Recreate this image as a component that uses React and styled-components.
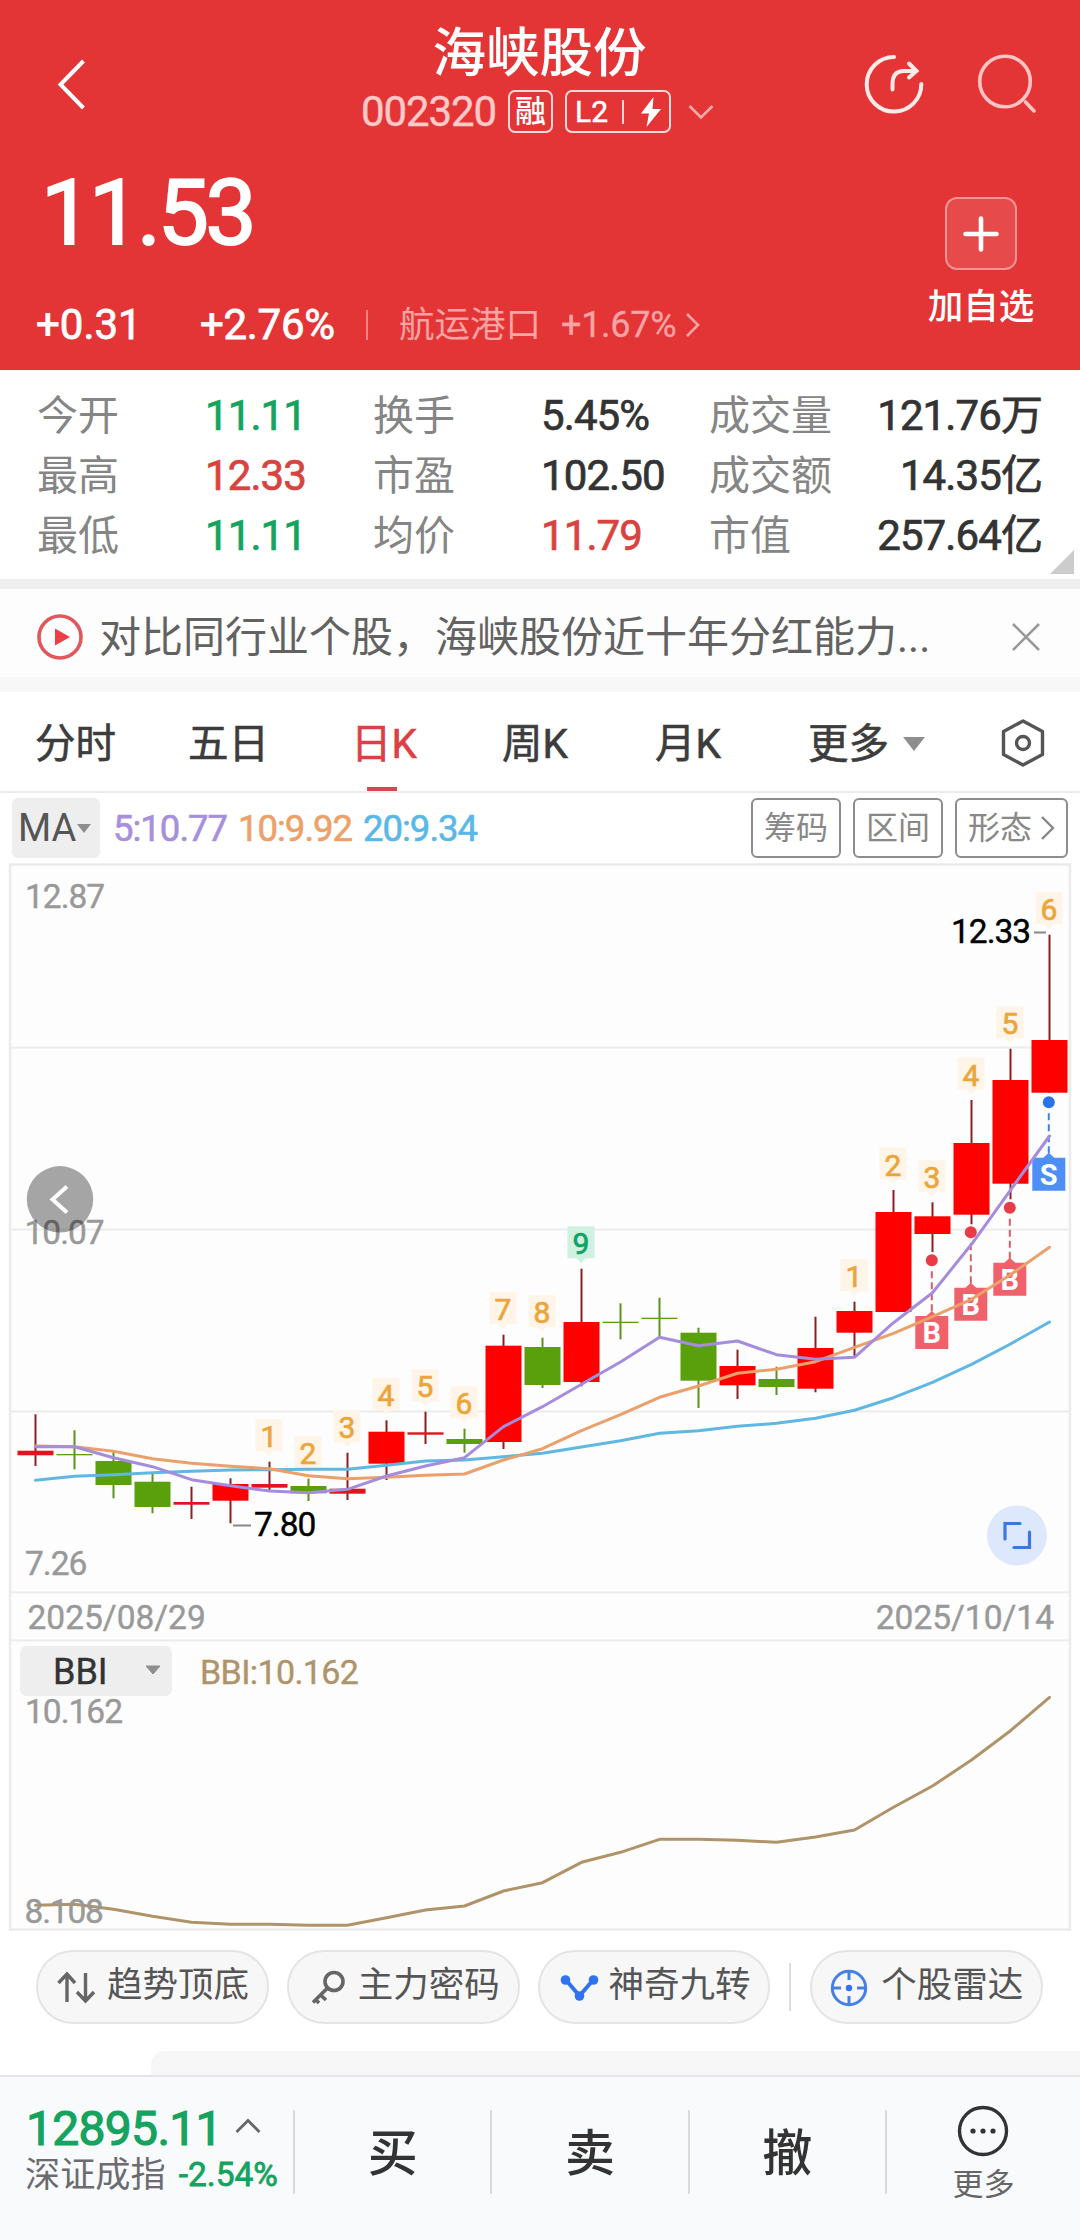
import React from 'react'
import styled, { createGlobalStyle } from 'styled-components'

const GlobalStyle = createGlobalStyle`
*{
    box-sizing: border-box;
}
body {
    margin: 0;
    background: #fff;
    font-family: Roboto, "Noto Sans CJK SC", sans-serif;
    color: #333;
}
svg {
    display: block;
    flex: none;
}
`;

const Page = styled.div`
display: flex;
flex-direction: column;
width: 1080px;
height: 2240px;
overflow: hidden;
background: #fff;
`;

const Num = styled.span`
font-size: ${p => p.$size || 42}px;
line-height: 1;
font-weight: 400;
-webkit-text-stroke: ${p => p.$stroke ?? 0.8}px currentColor;
letter-spacing: ${p => p.$gap ?? -0.6}px;
color: ${p => p.$color || 'inherit'};
white-space: nowrap;
`;

/* ---------- header ---------- */

const Header = styled.header`
height: 370px;
flex: none;
background: #e33536;
color: #fff;
display: flex;
flex-direction: column;
`;

const TopBar = styled.div`
display: grid;
grid-template-columns: 220px 1fr 220px;
height: 148px;
`;

const BackSlot = styled.div`
padding: 58px 0 0 56px;
`;

const TopIcons = styled.div`
display: flex;
gap: 50px;
padding: 53px 0 0 3px;
`;

const TitleBlock = styled.div`
display: flex;
flex-direction: column;
align-items: center;
padding-top: 22px;
`;

const Title = styled.h1`
margin: 0 1px 0 0;
font-size: 53.5px;
line-height: 64px;
font-weight: 500;
`;

const SubTitle = styled.div`
display: flex;
align-items: center;
height: 43px;
margin: 4px 5px 0 0;
`;

const Tag = styled.span`
display: flex;
align-items: center;
justify-content: center;
width: ${p => p.$w}px;
height: 43px;
margin-left: 12px;
border: 2px solid #ffd9d9;
border-radius: 7px;
font-size: 31px;
line-height: 40px;
font-weight: 500;
`;

const TagLine = styled.i`
width: 2px;
height: 24px;
margin: 0 17px 0 14px;
background: #ffd9d9;
`;

const SubArrow = styled.span`
margin-left: 17px;
`;

const PriceArea = styled.div`
display: flex;
justify-content: space-between;
flex: 1;
`;

const PriceColumn = styled.div`
display: flex;
flex-direction: column;
padding: 19px 0 0 36px;
`;

const PriceText = styled(Num)`
line-height: 92px;
margin-left: 5px;
`;

const ChangeRow = styled.div`
display: flex;
align-items: center;
height: 44px;
margin-top: 44px;
`;

const ChangeItem = styled.span`
display: flex;
width: ${p => p.$w}px;
`;

const ThinLine = styled.i`
width: 2px;
height: 30px;
margin-right: 31px;
background: #f08383;
`;

const Sector = styled.span`
display: flex;
align-items: center;
gap: 20px;
font-size: 35.5px;
line-height: 44px;
color: #faa3a4;
`;

const SectorArrow = styled.span`
margin-left: 1px;
`;

const WatchColumn = styled.div`
display: flex;
flex-direction: column;
align-items: center;
width: 198px;
padding-top: 49px;
`;

const PlusBox = styled.div`
display: flex;
align-items: center;
justify-content: center;
width: 72px;
height: 73px;
border: 2px solid #f09494;
border-radius: 12px;
background: #e74a4b;
`;

const WatchText = styled.span`
margin-top: 15px;
font-size: 35.5px;
line-height: 44px;
font-weight: 500;
`;

/* ---------- quote table ---------- */

const Quotes = styled.section`
position: relative;
height: 209px;
flex: none;
padding: 16px 38px 0 37px;
display: grid;
grid-template-columns: 168px 168px 168px 168px 1fr auto;
grid-auto-rows: 60px;
align-items: center;
`;

const QuoteLabel = styled.span`
font-size: 41px;
line-height: 60px;
color: #858585;
white-space: nowrap;
`;

const QuoteValue = styled.span`
font-size: 42px;
line-height: 60px;
letter-spacing: -0.9px;
-webkit-text-stroke: 0.7px currentColor;
color: ${p => p.$color || '#333'};
text-align: ${p => (p.$right ? 'right' : 'left')};
white-space: nowrap;
`;

const Corner = styled.i`
position: absolute;
right: 6px;
bottom: 5px;
border-left: 24px solid transparent;
border-bottom: 24px solid #ccc;
`;

const Band = styled.div`
flex: none;
height: ${p => p.$h}px;
background: ${p => p.$color};
`;

const Notice = styled.section`
display: flex;
align-items: center;
height: 88px;
flex: none;
padding: 8px 40px 0 37px;
background: #fdfdfd;
`;

const NoticeText = styled.span`
flex: 1;
margin: 2px 0 0 16px;
font-size: 42px;
line-height: 60px;
color: #626262;
`;

/* ---------- tabs ---------- */

const Tabs = styled.nav`
display: flex;
align-items: flex-start;
height: 101px;
flex: none;
padding-left: 35px;
border-bottom: 2px solid #ebebeb;
`;

const Tab = styled.span`
display: flex;
flex-direction: column;
width: ${p => p.$w}px;
height: 99px;
padding-top: 21px;
font-size: 40.5px;
line-height: 62px;
-webkit-text-stroke: 0.6px currentColor;
color: ${p => (p.$active ? '#dc3f45' : '#3c3c3c')};
white-space: nowrap;

&::after {
    content: '';
    display: ${p => (p.$active ? 'block' : 'none')};
    width: 30px;
    height: 4px;
    margin: 12px 0 0 16px;
    background: #d04a50;
}
`;

const MoreTab = styled(Tab)`
flex-direction: row;
align-items: center;
justify-content: flex-start;
gap: 14px;
height: 83px;
`;

const HexSlot = styled.span`
padding-top: 26px;
`;

const Caret = styled.i`
width: 0;
border-left: ${p => p.$w / 2}px solid transparent;
border-right: ${p => p.$w / 2}px solid transparent;
border-top: ${p => p.$h}px solid #8e8e8e;
`;

const MaRow = styled.div`
display: flex;
align-items: center;
height: 70px;
flex: none;
padding: 0 12px;
`;

const MaSelect = styled.span`
display: flex;
align-items: center;
gap: 1px;
width: 88px;
height: 60px;
margin-right: 13px;
padding-left: 6px;
border-radius: 6px;
background: #eee;
color: #555;
font-size: 38px;
line-height: 60px;
`;

const MaValue = styled.span`
width: 125px;
font-size: 36.5px;
letter-spacing: -1px;
-webkit-text-stroke: 0.6px currentColor;
color: ${p => p.$color};
white-space: nowrap;
`;

const MaButtons = styled.div`
display: flex;
gap: 12px;
margin-left: auto;
`;

const MaButton = styled.span`
display: flex;
align-items: center;
justify-content: center;
gap: 8px;
width: ${p => p.$w}px;
height: 60px;
border: 2px solid #8d8d8d;
border-radius: 6px;
font-size: 32px;
line-height: 58px;
color: #888;
`;

/* ---------- charts ---------- */

const ChartBox = styled.div`
flex: none;
height: 1069px;
`;

const ToolRow = styled.div`
display: flex;
align-items: center;
height: 120px;
flex: none;
padding: 0 37px 10px 36px;
`;

const Pill = styled.span`
display: flex;
align-items: center;
width: 233px;
height: 74px;
margin-right: ${p => p.$gap || 0}px;
border: 2px solid #e4e4e4;
border-radius: 37px;
background: #f7f7f7;
font-size: 35.5px;
line-height: 66px;
color: #555;
white-space: nowrap;

svg {
    margin: 2px 0 0 17px;
}
span {
    margin: -4px 0 0 8px;
}
`;

const PillLine = styled.i`
width: 2px;
height: 48px;
margin-right: 19px;
background: #ddd;
`;

const NextPanel = styled.div`
flex: none;
height: 24px;
margin: -1px 0 0 151px;
border-radius: 14px 0 0 0;
background: #f7f7f7;
`;

/* ---------- bottom bar ---------- */

const BottomBar = styled.footer`
display: flex;
flex: 1;
border-top: 2px solid #e5e5e7;
background: #f9fafc;
`;

const IndexBlock = styled.div`
flex: none;
width: 293px;
padding: 27px 0 0 26px;
`;

const IndexTop = styled.div`
display: flex;
align-items: center;
gap: 13px;
height: 50px;

svg {
    margin-top: -6px;
}
`;

const IndexBottom = styled.div`
display: flex;
align-items: center;
gap: 13px;
height: 42px;
margin-left: -1px;
font-size: 35.2px;
line-height: 42px;
color: #6b6b70;
white-space: nowrap;
`;

const TradeButton = styled.div`
flex: none;
display: flex;
justify-content: center;
width: 197.3px;
height: 84px;
margin-top: 33px;
border-left: 2px solid #dadadc;
font-size: 50px;
line-height: 88px;
font-weight: 500;
color: #333;
`;

const MoreButton = styled(TradeButton)`
flex: 1;
flex-direction: column;
justify-content: flex-start;
align-items: center;
font-size: 31px;
line-height: 44px;
font-weight: 400;
color: #666;

svg {
    margin-top: -5px;
}
span {
    margin-top: 6px;
}
`;

const GREEN = '#15a35f';
const RED = '#d9433f';

const quotes = [
    ['今开', '11.11', GREEN, '换手', '5.45%', '', '成交量', '121.76万'],
    ['最高', '12.33', RED, '市盈', '102.50', '', '成交额', '14.35亿'],
    ['最低', '11.11', GREEN, '均价', '11.79', RED, '市值', '257.64亿'],
];

// up, high, top, bottom, low, badge
const candles = [
    [1, 1414.3, 1450.7, 1455.3, 1466],
    [0, 1430.3, 1454, 1455.3, 1469.3],
    [0, 1451.7, 1461, 1485, 1498.3],
    [0, 1473.3, 1481.7, 1507, 1513.3],
    [1, 1486.7, 1502, 1504.7, 1519],
    [1, 1478.3, 1484, 1500.7, 1523.3],
    [1, 1461.7, 1484, 1487.7, 1490, '1'],
    [0, 1478.7, 1486, 1493.3, 1501, '2'],
    [1, 1452.7, 1488.7, 1493.7, 1500, '3'],
    [1, 1420.3, 1431.7, 1463.7, 1480, '4'],
    [1, 1411.7, 1432.3, 1434.7, 1444, '5'],
    [0, 1428.7, 1439, 1444, 1452.7, '6'],
    [1, 1334.7, 1345.7, 1442, 1449, '7'],
    [0, 1337.7, 1347, 1385, 1388, '8'],
    [1, 1268.7, 1322, 1382, 1386.3, '9'],
    [0, 1303.3, 1321.7, 1323, 1339.3],
    [0, 1297.7, 1317.7, 1319, 1338],
    [0, 1327.7, 1332.7, 1380.7, 1408],
    [1, 1349.7, 1366, 1385.3, 1399],
    [0, 1366.7, 1379, 1387, 1395],
    [1, 1316.7, 1348, 1388.7, 1392.3],
    [1, 1301.7, 1311, 1332.7, 1356.7, '1'],
    [1, 1190, 1212, 1312, 1312, '2'],
    [1, 1202.3, 1216.3, 1234, 1252, '3'],
    [1, 1100, 1143, 1214.7, 1224.3, '4'],
    [1, 1048.7, 1080, 1183.7, 1199.3, '5'],
    [1, 934.7, 1040, 1092.7, 1092.7, '6'],
];

const ma5 = [1446.7, 1446.7, 1457.7, 1466.7, 1479.7, 1485.7, 1491, 1492.7, 1489.3, 1476, 1466, 1457.7, 1426.7, 1406.7,
    1384.3, 1362, 1337.3, 1345.7, 1341, 1354.7, 1359.3, 1357.3, 1322.7, 1292.7, 1244.3, 1190, 1136];
const ma10 = [1446, 1446.7, 1451.3, 1458.7, 1463.3, 1466.3, 1468.7, 1475.7, 1478.7, 1477.3, 1475.3, 1474, 1460, 1448.7,
    1430.7, 1414.7, 1397.3, 1386, 1373.3, 1369.3, 1361.7, 1347.3, 1333.3, 1316.7, 1299.3, 1274.7, 1247.3];
const ma20 = [1480.3, 1476.3, 1474.7, 1472.7, 1471.3, 1470, 1469.7, 1469.3, 1469.3, 1465.3, 1461, 1460, 1456.7, 1453.3,
    1447, 1440.7, 1433.3, 1430.7, 1426.3, 1423.3, 1418.3, 1410.3, 1397.7, 1382.3, 1364.3, 1344, 1322];
const bbi = [1905.3, 1904.3, 1909.3, 1916.3, 1922.3, 1924.3, 1924.3, 1925.3, 1925.3, 1917.7, 1910, 1906, 1891, 1882.7,
    1862.3, 1852.3, 1839.3, 1839.3, 1840.3, 1842.3, 1837, 1830, 1807.3, 1786, 1760, 1730.7, 1697.3];

// index, dot y, box y, letter
const signals = [
    [23, 1260.3, 1316, 'B'],
    [24, 1232.3, 1287.7, 'B'],
    [25, 1207.7, 1262.7, 'B'],
    [26, 1102.3, 1157.7, 'S'],
];

const xAt = (i) => 35.5 + i * 39;
const toPoints = (list) => list.map((y, i) => `${xAt(i)},${y}`).join(' ');

const AxisText = ({ x, y, children, color = '#999', size = 33.5, gap = -1, anchor = 'start' }) => (
    <text x={x} y={y} fontSize={size} letterSpacing={gap} fill={color} stroke={color} strokeWidth="0.4" textAnchor={anchor}>{children}</text>
)

const Candle = ({ i, data }) => {
    const [up, high, top, bottom, low] = data;
    const x = xAt(i);
    const thin = bottom - top < 6;
    const body = up ? (thin ? '#e0141c' : '#ff0000') : '#5aa00c';
    return (
        <g>
            <line x1={x} x2={x} y1={high} y2={low} stroke={up ? '#8e1f1f' : '#5a9220'} strokeWidth="2" />
            <rect x={x - 18} y={top} width="36" height={bottom - top} fill={body} />
        </g>
    )
}

const Badge = ({ i, high, text }) => {
    const x = xAt(i) - 0.5;
    const y = high - 42.5;
    const green = text === '9';
    const color = green ? '#12a262' : '#eba53a';
    return (
        <g>
            <path d={`M${x - 13.5} ${y}h27v32h-9l-4.5 5l-4.5 -5h-9z`} fill={green ? '#d0f0e0' : '#fff4e8'} />
            <text x={x} y={y + 28} fontSize="30" stroke={color} strokeWidth="0.7" textAnchor="middle" fill={color}>{text}</text>
        </g>
    )
}

const Signal = ({ data }) => {
    const [i, dot, box, text] = data;
    const x = xAt(i) - 0.7;
    const sell = text === 'S';
    return (
        <g>
            <circle cx={x} cy={dot} r="6" fill={sell ? '#2a72e8' : '#ea3a45'} />
            <line x1={x} x2={x} y1={dot + 11} y2={box - 4} stroke={sell ? '#3f82dc' : '#d0606c'} strokeWidth="2" strokeDasharray="7 4" />
            <path d={`M${x - 16.5} ${box}h11l5.5 -5l5.5 5h11v33h-33z`} fill={sell ? '#4d8ef7' : '#f0616b'} />
            <text x={x} y={box + 27} fontSize="29" fontWeight="700" textAnchor="middle" fill="#fff">{text}</text>
        </g>
    )
}

const Charts = () => (
    <svg width="1080" height="1069" viewBox="0 863 1080 1069" fontFamily='Roboto, "Noto Sans CJK SC", sans-serif'>
        <rect x="10" y="864.5" width="1060" height="1065" fill="#fdfdfd" stroke="#ebebeb" strokeWidth="2.5" />
        <g stroke="#ececec" strokeWidth="2">
            <path d="M10 1047.5H1070M10 1229.5H1070M10 1411.5H1070M10 1592.5H1070M10 1640.5H1070" />
        </g>
        <AxisText x="25" y="908">12.87</AxisText>
        <AxisText x="24.5" y="1243.5">10.07</AxisText>
        <AxisText x="25" y="1575">7.26</AxisText>

        {candles.map((c, i) => <Candle key={i} i={i} data={c} />)}
        {candles.map((c, i) => c[5] && <Badge key={i} i={i} high={c[1]} text={c[5]} />)}
        {signals.map((s) => <Signal key={s[0]} data={s} />)}

        <g fill="none" strokeWidth="3" strokeLinejoin="round" strokeLinecap="round">
            <polyline points={toPoints(ma20)} stroke="#5fb7e2" />
            <polyline points={toPoints(ma10)} stroke="#eba06c" />
            <polyline points={toPoints(ma5)} stroke="#a58cdc" />
            <polyline points={toPoints(bbi)} stroke="#af9469" />
        </g>

        <path d="M1034 932.5H1046M233 1525.5H251" stroke="#888" strokeWidth="2" />
        <AxisText x="951" y="942.5" color="#000">12.33</AxisText>
        <AxisText x="254" y="1536" color="#000">7.80</AxisText>

        <circle cx="60" cy="1199.3" r="33.2" fill="#000" fillOpacity="0.35" />
        <path d="M67 1186.5L52.5 1199.5L67 1212.5" fill="none" stroke="#fff" strokeWidth="4" />

        <circle cx="1017" cy="1535.5" r="30" fill="#dde8fc" />
        <path d="M1020 1523.5H1005V1539M1029.5 1532V1547.5H1014" fill="none" stroke="#3c78df" strokeWidth="3.2" strokeLinecap="round" />

        <AxisText x="27.5" y="1629" gap="0">2025/08/29</AxisText>
        <AxisText x="1054" y="1629" gap="0" anchor="end">2025/10/14</AxisText>

        <rect x="20" y="1646" width="152" height="50" rx="7" fill="#eee" />
        <text x="53" y="1683.5" fontSize="36" fill="#333" stroke="#333" strokeWidth="0.4">BBI</text>
        <path d="M146 1666H160L153 1674Z" fill="#8e8e8e" stroke="#8e8e8e" strokeLinejoin="round" />
        <AxisText x="200" y="1683.5" size="34" color="#af9469" gap="-0.6">BBI:10.162</AxisText>
        <AxisText x="25" y="1723">10.162</AxisText>
        <AxisText x="24.5" y="1922.5" gap="-1.2">8.108</AxisText>
    </svg>
)

const App = () => {
    return (
        <>
        <GlobalStyle />
        <Page>
            <Header>
                <TopBar>
                    <BackSlot>
                        <svg width="30" height="52" viewBox="0 0 30 52" fill="none" stroke="#fff" strokeWidth="4">
                            <path d="M27.5 3L4.5 26.5L27.5 50" />
                        </svg>
                    </BackSlot>
                    <TitleBlock>
                        <Title>海峡股份</Title>
                        <SubTitle>
                            <Num $size={42} $stroke={0.4} $gap={-1.1} $color="#ffc9c9">002320</Num>
                            <Tag $w={45}>融</Tag>
                            <Tag $w={106}>
                                <Num $size={30} $gap={0} $stroke={0.5}>L2</Num>
                                <TagLine />
                                <svg width="20" height="30" viewBox="0 0 20 30" fill="#fff">
                                    <path d="M12.5 0L0 16.5H8L5.5 30L20 12H11.5Z" />
                                </svg>
                            </Tag>
                            <SubArrow>
                                <svg width="26" height="16" viewBox="0 0 26 16" fill="none" stroke="#f7a9a9" strokeWidth="2.6">
                                    <path d="M1.5 2L13 13.5L24.5 2" />
                                </svg>
                            </SubArrow>
                        </SubTitle>
                    </TitleBlock>
                    <TopIcons>
                        <svg width="62" height="62" viewBox="0 0 62 62" fill="none" stroke="#ffeaea" strokeWidth="4" strokeLinecap="round">
                            <path d="M31 4A27.3 27.3 0 1 0 58.3 31" />
                            <path d="M29.5 36.5V31C29.5 22 34 18 41 18H53M46 10.5L53.5 18L46 24.5" />
                        </svg>
                        <svg width="64" height="62" viewBox="0 0 64 62" fill="none" stroke="#ffc3c3" strokeWidth="3.6" strokeLinecap="round">
                            <circle cx="30" cy="28.5" r="25.3" />
                            <path d="M50.5 49L59 58" />
                        </svg>
                    </TopIcons>
                </TopBar>
                <PriceArea>
                    <PriceColumn>
                        <PriceText $size={91} $gap={-3.2} $stroke={2}>11.53</PriceText>
                        <ChangeRow>
                            <ChangeItem $w={164}><Num $gap={0}>+0.31</Num></ChangeItem>
                            <ChangeItem $w={166}><Num $gap={-0.3}>+2.76%</Num></ChangeItem>
                            <ThinLine />
                            <Sector>
                                航运港口
                                <Num $size={36} $stroke={0.3} $gap={-0.3}>+1.67%</Num>
                            </Sector>
                            <SectorArrow>
                                <svg width="26" height="26" viewBox="0 0 26 26" fill="none" stroke="#faa3a4" strokeWidth="2.6">
                                    <path d="M10 2L21 13L10 24" />
                                </svg>
                            </SectorArrow>
                        </ChangeRow>
                    </PriceColumn>
                    <WatchColumn>
                        <PlusBox>
                            <svg width="38" height="38" viewBox="0 0 38 38" stroke="#fff" strokeWidth="4.6" strokeLinecap="round">
                                <path d="M19 3.5V34.5M3.5 19H34.5" />
                            </svg>
                        </PlusBox>
                        <WatchText>加自选</WatchText>
                    </WatchColumn>
                </PriceArea>
            </Header>

            <Quotes>
                {quotes.map((q) => (
                    <React.Fragment key={q[0]}>
                        <QuoteLabel>{q[0]}</QuoteLabel>
                        <QuoteValue $color={q[2]}>{q[1]}</QuoteValue>
                        <QuoteLabel>{q[3]}</QuoteLabel>
                        <QuoteValue $color={q[5]}>{q[4]}</QuoteValue>
                        <QuoteLabel>{q[6]}</QuoteLabel>
                        <QuoteValue $right>{q[7]}</QuoteValue>
                    </React.Fragment>
                ))}
                <Corner />
            </Quotes>
            <Band $h={10} $color="#eeeeee" />
            <Notice>
                <svg width="46" height="48" viewBox="0 0 46 48">
                    <circle cx="23" cy="24" r="21" fill="none" stroke="#e0585e" strokeWidth="3.6" />
                    <path d="M18 15.5L33 24L18 32.5Z" fill="#ec3f48" />
                </svg>
                <NoticeText>对比同行业个股，海峡股份近十年分红能力...</NoticeText>
                <svg width="28" height="28" viewBox="0 0 28 28" stroke="#999" strokeWidth="2.6">
                    <path d="M1 1L27 27M27 1L1 27" />
                </svg>
            </Notice>
            <Band $h={15} $color="#f7f7f7" />

            <Tabs>
                <Tab $w={153}>分时</Tab>
                <Tab $w={163}>五日</Tab>
                <Tab $w={151} $active>日K</Tab>
                <Tab $w={153}>周K</Tab>
                <Tab $w={153}>月K</Tab>
                <MoreTab $w={191}>更多<Caret $w={22} $h={14} /></MoreTab>
                <HexSlot>
                    <svg width="48" height="50" viewBox="0 0 48 50" fill="none" stroke="#555" strokeWidth="3.4" strokeLinejoin="round">
                        <path d="M24 3L43.5 13.5V36.5L24 47L4.5 36.5V13.5Z" />
                        <circle cx="24" cy="25" r="6.5" />
                    </svg>
                </HexSlot>
            </Tabs>

            <MaRow>
                <MaSelect>MA<Caret $w={15} $h={9} /></MaSelect>
                <MaValue $color="#a78fdc">5:10.77</MaValue>
                <MaValue $color="#eba26a">10:9.92</MaValue>
                <MaValue $color="#5ab8e8">20:9.34</MaValue>
                <MaButtons>
                    <MaButton $w={90}>筹码</MaButton>
                    <MaButton $w={90}>区间</MaButton>
                    <MaButton $w={113}>
                        形态
                        <svg width="15" height="24" viewBox="0 0 15 24" fill="none" stroke="#888" strokeWidth="2.4">
                            <path d="M2 1L13 12L2 23" />
                        </svg>
                    </MaButton>
                </MaButtons>
            </MaRow>

            <ChartBox>
                <Charts />
            </ChartBox>

            <ToolRow>
                <Pill $gap={18}>
                    <svg width="44" height="36" viewBox="0 0 44 36" fill="none" stroke="#666" strokeWidth="3.4">
                        <path d="M12 32V4M3.5 13L12 4L20 13M30.5 3V31M22 22L30.5 31L39 22" />
                    </svg>
                    <span>趋势顶底</span>
                </Pill>
                <Pill $gap={18}>
                    <svg width="44" height="36" viewBox="0 0 44 36" fill="none" stroke="#666" strokeWidth="3.6">
                        <circle cx="28" cy="11.5" r="9" />
                        <path d="M21.5 18L7 32.5M14 24.5L20 30M9 29L13 33" />
                    </svg>
                    <span>主力密码</span>
                </Pill>
                <Pill $gap={19}>
                    <svg width="44" height="36" viewBox="0 0 44 36" fill="#2f73f0">
                        <path d="M9 10L22.5 26L36 10" fill="none" stroke="#2f73f0" strokeWidth="4" />
                        <circle cx="8.5" cy="10" r="4.8" />
                        <circle cx="36.5" cy="10" r="4.8" />
                        <circle cx="22.5" cy="26" r="4.8" />
                    </svg>
                    <span>神奇九转</span>
                </Pill>
                <PillLine />
                <Pill>
                    <svg width="44" height="40" viewBox="0 0 44 40" fill="none" stroke="#4580e6" strokeWidth="3">
                        <circle cx="20" cy="20" r="16.7" />
                        <path d="M20 3V12M20 28V37M3 20H12M28 20H37" />
                        <circle cx="20" cy="20" r="3.2" fill="#2f73f0" stroke="none" />
                    </svg>
                    <span>个股雷达</span>
                </Pill>
            </ToolRow>
            <NextPanel />

            <BottomBar>
                <IndexBlock>
                    <IndexTop>
                        <Num $size={48} $gap={-0.7} $stroke={1.2} $color={GREEN}>12895.11</Num>
                        <svg width="26" height="16" viewBox="0 0 26 16" fill="none" stroke="#666" strokeWidth="2.8">
                            <path d="M1.5 14L13 2.5L24.5 14" />
                        </svg>
                    </IndexTop>
                    <IndexBottom>
                        深证成指
                        <Num $size={33.5} $gap={0} $color={GREEN}>-2.54%</Num>
                    </IndexBottom>
                </IndexBlock>
                <TradeButton>买</TradeButton>
                <TradeButton>卖</TradeButton>
                <TradeButton>撤</TradeButton>
                <MoreButton>
                    <svg width="52" height="52" viewBox="0 0 52 52" fill="#333">
                        <circle cx="26" cy="26" r="23.5" fill="none" stroke="#333" strokeWidth="3.4" />
                        <circle cx="16" cy="26" r="2.6" />
                        <circle cx="26" cy="26" r="2.6" />
                        <circle cx="36" cy="26" r="2.6" />
                    </svg>
                    <span>更多</span>
                </MoreButton>
            </BottomBar>
        </Page>
        </>
    )
}

export default App
